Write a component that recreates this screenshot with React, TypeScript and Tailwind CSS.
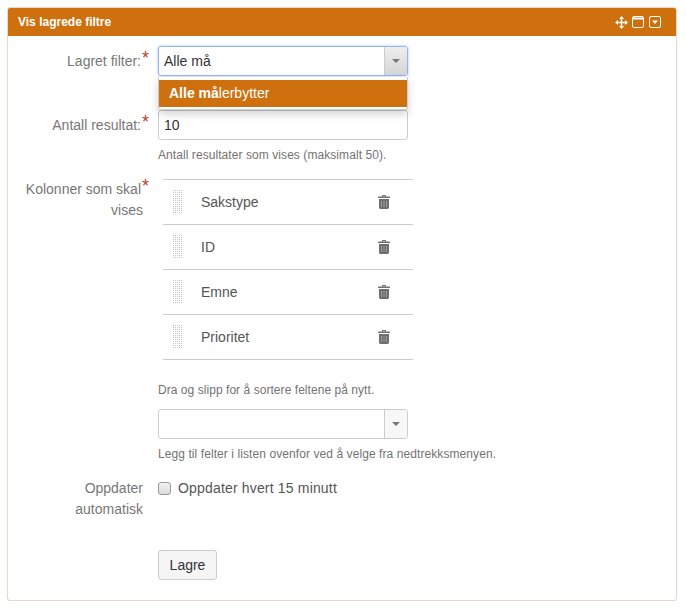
import React from "react";

const columns = ["Sakstype", "ID", "Emne", "Prioritet"];

function Star() {
  return <sup className="absolute -right-[8px] -top-[4px] text-[18px] leading-none text-[#c0392b]">*</sup>;
}

function Caret({ color = "#777" }: { color?: string }) {
  return (
    <svg width="8" height="4" viewBox="0 0 8 4">
      <path d="M0 0h8L4 4z" fill={color} />
    </svg>
  );
}

function Grip() {
  const dots = Array.from({ length: 60 });
  return (
    <div className="grid w-[9px] grid-cols-5 gap-[1px]">
      {dots.map((_, i) => (
        <span key={i} className="h-[1px] w-[1px] bg-[#c4c4c4]" />
      ))}
    </div>
  );
}

function TrashIcon() {
  return (
    <svg width="12" height="14" viewBox="0 0 12 14" className="mr-[23px]">
      <path d="M4 1.500V.8C4 .4 4.400 0 4.800 0h2.400C7.600 0 8 .4 8 .8v.7h3.200c.4 0 .8.300.8.700V3H0v-.8c0-.4.400-.7.800-.7zM5 1.500h2V1H5z" fill="#6f6f6f" />
      <path d="M1 4h10v8.600c0 .8-.6 1.400-1.400 1.400H2.400C1.600 14 1 13.400 1 12.600z" fill="#6f6f6f" />
      <path d="M3.500 6v6M6 6v6M8.500 6v6" stroke="#9a9a9a" strokeWidth="1" />
    </svg>
  );
}

function Row({ label, top, children }: { label: React.ReactNode; top?: string; children: React.ReactNode }) {
  return (
    <div className="flex">
      <div className={`w-[135px] shrink-0 text-right leading-[21px] text-[#777] ${top ?? "pt-[5px]"}`}>{label}</div>
      <div className="ml-[15px] min-w-0 flex-1">{children}</div>
    </div>
  );
}

export default function App() {
  return (
    <div className="h-[609px] bg-white pl-[7px] pr-[9px] pt-[7px] font-['Liberation_Sans',Arial,sans-serif] text-[14px] text-[#555]">
      <div className="h-[594px] overflow-hidden rounded-[3px] border border-[#e3d9cf] bg-white">
        {/* Header */}
        <div className="flex h-[28px] items-center justify-between bg-[#ce700e] pl-[10px] pr-[15px] text-[12px] font-bold text-white">
          <span>Vis lagrede filtre</span>
          <div className="flex items-center gap-[4px]">
            <svg width="13" height="13" viewBox="0 0 13 13" fill="none" stroke="#fff" strokeWidth="1.500">
              <path d="M6.500 1v11M1 6.500h11" />
              <path d="M6.500 0 9 3H4zM6.500 13 4 10h5zM0 6.500 3 4v5zM13 6.500 10 9V4z" fill="#fff" stroke="none" />
            </svg>
            <svg width="12" height="12" viewBox="0 0 12 12" fill="none">
              <rect x="0.500" y="0.500" width="11" height="11" rx="1.500" stroke="#fff" />
              <path d="M0 1.500h12v2H0z" fill="#fff" />
            </svg>
            <svg className="ml-[1px]" width="12" height="12" viewBox="0 0 12 12" fill="none">
              <rect x="0.500" y="0.500" width="11" height="11" rx="1.500" stroke="#fff" />
              <path d="M3 4.500h6L6 8z" fill="#fff" />
            </svg>
          </div>
        </div>

        {/* Form */}
        <div className="pt-[10px]">
          <div className="relative">
            <Row label={<span className="relative mr-[2px]">Lagret filter:<Star /></span>}>
              <div className="flex h-[30px] w-[250px] overflow-hidden rounded-[3px] border border-[#93b4f0] shadow-[0_0_3px_#a9c4f5]">
                <div className="flex-1 pl-[5px] leading-[28px] text-[#333]">Alle må</div>
                <div className="flex w-[23px] items-center justify-center border-l border-[#ccc] bg-gradient-to-b from-[#eee] to-[#d5d5d5]">
                  <Caret />
                </div>
              </div>
            </Row>

            {/* Open dropdown lies over the next field */}
            <div className="absolute left-[150px] top-[31px] z-10 h-[33px] w-[250px] rounded-b-[3px] border border-t-0 border-[#ccc] bg-white pt-[3px] shadow-[0_4px_8px_rgba(0,0,0,0.18)]">
              <div className="h-[27px] bg-[#ce700e] pl-[10px] leading-[27px] text-white">
                <b>Alle må</b>lerbytter
              </div>
            </div>
          </div>

          <div className="mt-[34px]">
            <Row label={<span className="relative mr-[2px]">Antall resultat:<Star /></span>}>
              <div className="h-[30px] w-[250px] rounded-[3px] border border-[#ccc] pl-[5px] leading-[28px] text-[#333]">10</div>
              <p className="mt-[8px] text-[12px] leading-[15px] tracking-[0.07px] text-[#737373]">Antall resultater som vises (maksimalt 50).</p>
            </Row>
          </div>

          <div className="mt-[16px]">
            <Row
              top="pt-0"
              label={
                <span className="relative inline-block">
                  <span className="relative mr-[2px]">Kolonner som skal<Star /></span>
                  <br />
                  vises
                </span>
              }
            >
              <ul className="ml-[5px] w-[250px] border-t border-[#ccc]">
                {columns.map((c) => (
                  <li key={c} className="flex h-[45px] items-center border-b border-[#ccc] text-[#555]">
                    <div className="ml-[10px] mb-[2px]">
                      <Grip />
                    </div>
                    <span className="ml-[19px] flex-1">{c}</span>
                    <TrashIcon />
                  </li>
                ))}
              </ul>
              <p className="mt-[23px] text-[12px] leading-[15px] tracking-[0.05px] text-[#737373]">Dra og slipp for å sortere feltene på nytt.</p>
              <div className="mt-[11px] flex h-[30px] w-[250px] overflow-hidden rounded-[3px] border border-[#ccc]">
                <div className="flex-1" />
                <div className="flex w-[23px] items-center justify-center border-l border-[#ccc] bg-[#f7f7f7]">
                  <Caret />
                </div>
              </div>
              <p className="mt-[8px] text-[12px] leading-[15px] tracking-[0.08px] text-[#737373]">Legg til felter i listen ovenfor ved å velge fra nedtrekksmenyen.</p>
            </Row>
          </div>

          <div className="mt-[16px]">
            <Row top="pt-0" label={<>Oppdater<br />automatisk</>}>
              <div className="flex h-[21px] items-center">
                <span className="h-[13px] w-[13px] rounded-[3px] border border-[#9a9a9a] bg-gradient-to-b from-[#f2f2f2] to-[#dcdcdc]" />
                <span className="ml-[7px] tracking-[0.17px] text-[#555]">Oppdater hvert 15 minutt</span>
              </div>
            </Row>
          </div>

          <div className="ml-[150px] mt-[30px]">
            <button className="h-[30px] w-[59px] rounded-[3px] border border-[#ccc] bg-[#f5f5f5] text-[14px] text-[#333]">Lagre</button>
          </div>
        </div>
      </div>
    </div>
  );
}
